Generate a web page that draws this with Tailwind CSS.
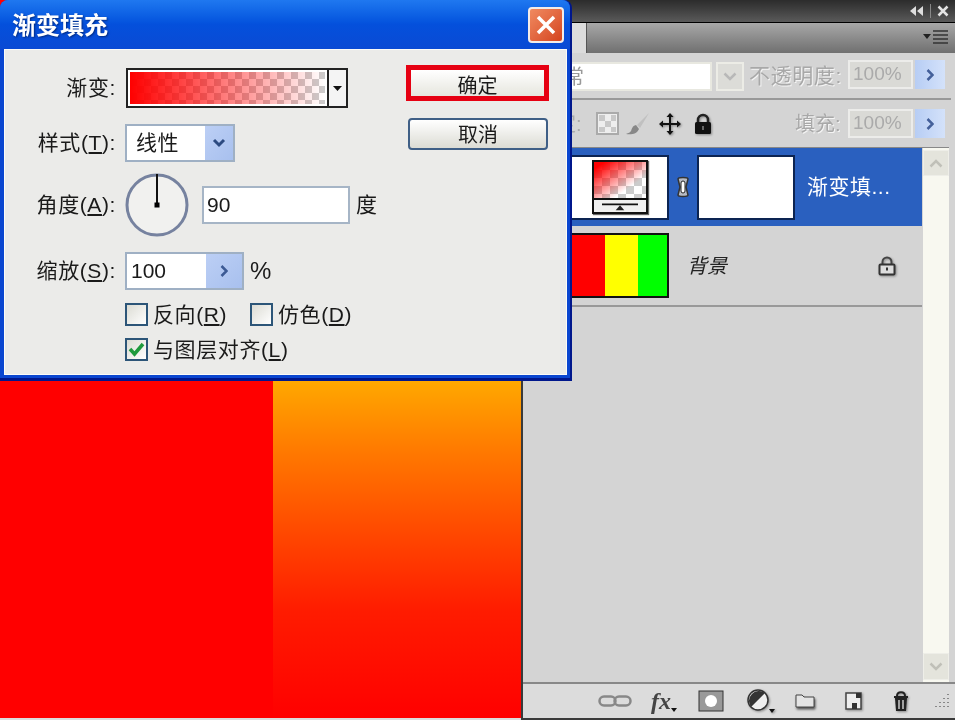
<!DOCTYPE html>
<html lang="zh-CN">
<head>
    <meta charset="UTF-8">
    <title>渐变填充</title>
    <script src="https://cdn.jsdelivr.net/npm/@tailwindcss/browser@4"></script>
</head>
<body class="bg-[#d4d4d4] overflow-hidden">
<div class="relative flex items-start w-[955px] h-[720px] overflow-hidden bg-[#dcdcdc] text-[#1a1a1a] text-[20px] blur-[0.5px] font-['Liberation_Sans','Noto_Sans_CJK_SC',sans-serif]">

    <!-- document canvas -->
    <div class="flex w-[521px] h-[718px] shrink-0">
        <div class="w-[273px] bg-[#ff0000]"></div>
        <div class="flex-1 bg-[linear-gradient(to_bottom,#ffa800_381px,#ff7a00_450px,#ff4a00_530px,#ff1c00_610px,#ff0a00_680px,#ff0000_718px)]"></div>
    </div>

    <!-- layers panel -->
    <div class="flex flex-col w-[434px] h-[720px] border-l-2 border-b-2 border-[#3a3a3a] bg-[#d4d4d4]">
        <div class="flex items-center justify-end gap-[6px] h-[23px] pr-[6px] border-b border-black bg-linear-to-b from-[#2c2c2c] to-[#5a5a5a]">
            <svg width="14" height="10" viewBox="0 0 14 10"><path d="M6 0v10L0 5zM13 0v10L7 5z" fill="#ddd"/></svg>
            <div class="w-px h-[14px] bg-[#888]"></div>
            <svg width="12" height="12" viewBox="0 0 12 12"><path d="M1.500 1.500l9 9M10.500 1.500l-9 9" stroke="#e4e4e4" stroke-width="2.500"/></svg>
        </div>
        <div class="flex items-stretch justify-between h-[30px] bg-linear-to-b from-[#a8a8a8] to-[#707070]">
            <div class="w-[64px] bg-[#dcdcdc] border-r border-[#555]"></div>
            <svg class="mr-[6px] mt-[7px]" width="26" height="16" viewBox="0 0 26 16"><path d="M0 4h8L4 9z" fill="#222"/><path d="M10 1h15M10 5h15M10 9h15M10 13h15" stroke="#333" stroke-width="1.500"/></svg>
        </div>

        <!-- blend mode and opacity -->
        <div class="flex items-center h-[47px] mr-[4px] border-b-2 border-[#999]">
            <div class="flex items-center w-[189px] h-[29px] mt-[2px] pl-[19px] bg-white border-2 border-[#e8e8e0] text-[#999]">正常</div>
            <div class="flex items-center justify-center w-[28px] h-[29px] mt-[2px] ml-[4px] bg-[#dcdcd8] border-2 border-[#ecece6]">
                <svg width="14" height="9" viewBox="0 0 14 9"><path d="M1.500 1.500L7 7l5.500-5.500" fill="none" stroke="#b8b8b8" stroke-width="2.500"/></svg>
            </div>
            <span class="w-[92px] ml-[5px] whitespace-nowrap text-[21px] tracking-[0.6px] text-[#a8a8a8] [text-shadow:1px_1px_0_#f4f4f4]">不透明度:</span>
            <div class="flex items-center w-[65px] h-[29px] mb-[2px] ml-[7px] pl-[3px] bg-[#dadad6] border-2 border-[#ececea] text-[19px] text-[#aaa]">100%</div>
            <div class="flex items-center justify-center w-[30px] h-[29px] mb-[2px] ml-[2px] bg-linear-to-r from-[#b7cdf4] to-[#d4e2fa]">
                <svg width="8" height="12" viewBox="0 0 8 12"><path d="M1.500 1L6.500 6l-5 5" fill="none" stroke="#44609a" stroke-width="2.500"/></svg>
            </div>
        </div>

        <!-- locks and fill -->
        <div class="flex items-center h-[47px] mr-[4px]">
            <span class="w-[50px] pl-[33px] whitespace-nowrap text-[#aaa]">定:</span>
            <svg class="ml-[23px] shrink-0" width="24" height="24" viewBox="0 0 24 24"><rect x="1" y="1" width="21" height="21" fill="#eee" stroke="#aaa" stroke-width="2"/><path d="M3 3h6v6H3zM15 3h5v6h-5zM9 9h6v6H9zM3 15h6v5H3zM15 15h5v5h-5z" fill="#c8c8c8"/></svg>
            <svg class="ml-[5px] shrink-0" width="26" height="24" viewBox="0 0 26 24"><path d="M24 1L12 13l3 3z" fill="#c0c0c0"/><path d="M11 13c-4 1-4 4-5 6-1 2-4 2-5 3 5 1 11 0 13-5z" fill="#888"/></svg>
            <svg class="ml-[8px] shrink-0 drop-shadow-[1px_1px_1px_#888]" width="22" height="24" viewBox="0 0 22 24"><path d="M11 1l3.500 4h-2.500v6h6V8.500l4 3.500-4 3.500V13h-6v6h2.500L11 23l-3.500-4H10v-6H4v2.500L0 12l4-3.500V11h6V5H7.500z" fill="#111"/></svg>
            <svg class="ml-[13px] shrink-0 drop-shadow-[1px_1px_1px_#888]" width="18" height="22" viewBox="0 0 18 22"><path d="M4 10V7a5 5 0 0110 0v3" fill="none" stroke="#222" stroke-width="2.500"/><rect x="1" y="9" width="16" height="12" rx="1.500" fill="#111"/><rect x="8" y="13" width="2" height="4" fill="#666"/></svg>
            <span class="w-[48px] ml-[83px] whitespace-nowrap text-[#a8a8a8] [text-shadow:1px_1px_0_#f4f4f4]">填充:</span>
            <div class="flex items-center w-[65px] h-[29px] ml-[5px] pl-[3px] bg-[#dadad6] border-2 border-[#ececea] text-[19px] text-[#aaa]">100%</div>
            <div class="flex items-center justify-center w-[30px] h-[29px] ml-[2px] bg-linear-to-r from-[#b7cdf4] to-[#d4e2fa]">
                <svg width="8" height="12" viewBox="0 0 8 12"><path d="M1.500 1L6.500 6l-5 5" fill="none" stroke="#44609a" stroke-width="2.500"/></svg>
            </div>
        </div>

        <!-- layer list -->
        <div class="flex flex-1 min-h-0 border-t border-[#888] mr-[6px]">
            <div class="flex flex-col gap-[2px] w-[400px]">
                <div class="flex items-center h-[78px] pl-[20px] bg-[#2a60bf]">
                    <div class="relative flex items-center justify-center w-[126px] h-[65px] bg-white border-2 border-[#0c2452]">
                        <div class="flex flex-col w-[56px] h-[54px] ml-[28px] border-2 border-[#111] shadow-[1px_1px_1px_#666]">
                            <div class="relative flex-1 bg-[repeating-conic-gradient(#ccc_0_25%,#fff_0_50%)] bg-size-[16px_16px]">
                                <div class="absolute inset-0 bg-linear-to-br from-[#ff0000] from-10% to-transparent to-70%"></div>
                            </div>
                            <svg class="bg-[#f0f0f0] border-t-2 border-[#111]" width="52" height="14" viewBox="0 0 52 14"><path d="M5 5h42" stroke="#111" stroke-width="2"/><path d="M26 6l5 6H21z" fill="#222"/></svg>
                        </div>
                    </div>
                    <svg class="mx-[7px] shrink-0" width="14" height="24" viewBox="0 0 14 24"><path d="M2 4c0-2 10-2 10 0l-2 8 2 8c0 2-10 2-10 0l2-8z" fill="#b8bcc4" stroke="#333" stroke-width="1.500"/><rect x="5" y="6" width="4" height="12" rx="2" fill="#fff" stroke="#222"/></svg>
                    <div class="w-[98px] h-[65px] bg-white border-2 border-[#0c2452]"></div>
                    <span class="ml-[12px] text-white text-[21px] tracking-[0.5px] whitespace-nowrap">渐变填...</span>
                </div>
                <div class="flex items-center h-[79px] pl-[20px] pb-[2px] border-b-2 border-[#999]">
                    <div class="flex w-[126px] h-[65px] border-2 border-[#111]">
                        <div class="w-[60px] bg-[#ff0000]"></div>
                        <div class="w-[33px] bg-[#ffff00]"></div>
                        <div class="flex-1 bg-[#00ff00]"></div>
                    </div>
                    <span class="ml-[18px] italic text-[20px] text-[#222]">背景</span>
                    <svg class="ml-[151px] drop-shadow-[1px_1px_1px_#888]" width="18" height="20" viewBox="0 0 18 20"><path d="M4.500 9V6a4.500 4.500 0 019 0v3" fill="none" stroke="#444" stroke-width="2"/><rect x="1.500" y="8.500" width="15" height="10" rx="1" fill="#ddd" stroke="#333" stroke-width="2"/><rect x="8" y="11.500" width="2" height="3" fill="#333"/></svg>
                </div>
            </div>
            <div class="flex flex-col justify-between w-[26px] ml-px pt-[2px] pb-[2px] bg-[#f8f8f0]">
                <div class="flex items-center justify-center h-[26px] bg-[#e4e4dc] border border-[#eeeee8]">
                    <svg width="14" height="9" viewBox="0 0 14 9"><path d="M1.500 7.500L7 2l5.500 5.500" fill="none" stroke="#c0c0b8" stroke-width="2.500"/></svg>
                </div>
                <div class="flex items-center justify-center h-[27px] bg-[#e4e4dc] border border-[#eeeee8]">
                    <svg width="14" height="9" viewBox="0 0 14 9"><path d="M1.500 1.500L7 7l5.500-5.500" fill="none" stroke="#c0c0b8" stroke-width="2.500"/></svg>
                </div>
            </div>
        </div>

        <!-- panel buttons -->
        <div class="flex items-center h-[36px] border-t-2 border-[#888] bg-[#dcdcdc]">
            <svg class="ml-[75px] shrink-0" width="34" height="14" viewBox="0 0 34 14"><rect x="1.500" y="2.500" width="16" height="9" rx="4.500" fill="none" stroke="#888" stroke-width="2.500"/><rect x="16.500" y="2.500" width="16" height="9" rx="4.500" fill="none" stroke="#888" stroke-width="2.500"/></svg>
            <div class="flex items-start w-[29px] ml-[19px] font-['Liberation_Serif',serif] italic font-bold text-[24px] leading-[24px] text-[#444]">fx<svg class="mt-[19px]" width="6" height="4" viewBox="0 0 6 4"><path d="M0 0h6L3 4z" fill="#111"/></svg></div>
            <svg class="ml-[18px] shrink-0" width="26" height="22" viewBox="0 0 26 22"><rect x="1" y="1" width="24" height="20" fill="#999" stroke="#333"/><circle cx="13" cy="11" r="6" fill="#fff"/></svg>
            <svg class="ml-[23px] shrink-0 drop-shadow-[1px_1px_1px_#888]" width="28" height="24" viewBox="0 0 28 24"><circle cx="11" cy="11" r="10" fill="#eee" stroke="#333" stroke-width="1.500"/><path d="M18 4A10 10 0 004 18z" fill="#333"/><path d="M22 20h6l-3 4z" fill="#111"/></svg>
            <svg class="ml-[20px] shrink-0 drop-shadow-[1px_2px_1px_#555]" width="20" height="16" viewBox="0 0 20 16"><path d="M1 14V2h6l2 2h10v10z" fill="#e4e4e4" stroke="#444" stroke-width="1"/></svg>
            <svg class="ml-[30px] shrink-0 drop-shadow-[1px_1px_1px_#888]" width="17" height="18" viewBox="0 0 17 18"><rect x="1" y="1" width="15" height="16" fill="#eee" stroke="#444" stroke-width="1.500"/><path d="M11 1h5v5h-5zM7 11h5v6H7z" fill="#333"/></svg>
            <svg class="ml-[30px] shrink-0 drop-shadow-[1px_1px_1px_#888]" width="18" height="22" viewBox="0 0 18 22"><path d="M2 7h14M5 6c0-5 8-5 8 0" fill="none" stroke="#222" stroke-width="2"/><path d="M3 8h12l-1 13H4z" fill="#222"/><path d="M7 10v9M11 10v9" stroke="#ccc" stroke-width="1.500"/></svg>
            <svg class="ml-[23px] shrink-0" width="17" height="17" viewBox="0 0 17 17"><path d="M15 1v1M11 5v1M15 5v1M7 9v1M11 9v1M15 9v1M3 13v1M7 13v1M11 13v1M15 13v1" stroke="#888" stroke-width="2"/></svg>
        </div>
    </div>

    <!-- gradient fill dialog -->
    <div class="absolute left-0 top-0 flex flex-col w-[572px] h-[381px] pl-[4px] pr-[3px] pb-[3px] rounded-t-[8px] bg-[#0a46d0] border-r-2 border-b-3 border-[#00178c]">
        <div class="flex items-center justify-between h-[49px] pl-[9px] pr-[6px] -ml-[4px] -mr-[3px] rounded-t-[8px] bg-linear-to-b from-[#1f78f0] via-[#0450dc] to-[#0a4ad4]">
            <span class="ml-[3px] mt-[2px] font-bold text-[24px] text-white [text-shadow:1px_1px_2px_#002a80]">渐变填充</span>
            <div class="flex items-center justify-center w-[36px] h-[36px] rounded-[4px] border-2 border-[#f4ece8] bg-linear-to-br from-[#f08a60] to-[#d4421c]">
                <svg width="22" height="22" viewBox="0 0 22 22"><path d="M3 3l16 16M19 3L3 19" stroke="#fff" stroke-width="3.500"/></svg>
            </div>
        </div>
        <div class="flex flex-1 min-h-0 bg-[#ebebe9] border border-[#fbfbf8] text-[21px] tracking-[0.6px]">
            <div class="flex flex-col w-[401px] pt-[18px]">
                <div class="flex items-center h-[40px]">
                    <span class="w-[111px] text-right">渐变:</span>
                    <div class="flex w-[222px] h-[40px] ml-[10px] border-2 border-[#222] bg-white">
                        <div class="relative flex-1 border-2 border-white bg-[repeating-conic-gradient(#ccc_0_25%,#fff_0_50%)] bg-size-[14px_14px]">
                            <div class="absolute inset-0 bg-linear-to-r from-[#ff0000] to-transparent"></div>
                        </div>
                        <div class="flex items-center justify-center w-[19px] border-l-2 border-[#222] bg-[#f4f4f4]">
                            <svg width="9" height="5" viewBox="0 0 9 5"><path d="M0 0h9L4.500 5z" fill="#111"/></svg>
                        </div>
                    </div>
                </div>
                <div class="flex items-center h-[38px] mt-[16px]">
                    <span class="w-[111px] text-right whitespace-nowrap">样式(<u>T</u>):</span>
                    <div class="flex w-[110px] h-[38px] ml-[9px] bg-white border-2 border-[#9fb0c4]">
                        <span class="flex-1 pl-[9px] leading-[34px]">线性</span>
                        <div class="flex items-center justify-center w-[28px] bg-linear-to-br from-[#bccff5] to-[#a8c0ee]">
                            <svg width="14" height="10" viewBox="0 0 14 10"><path d="M2 2l5 5 5-5" fill="none" stroke="#2c4a80" stroke-width="3"/></svg>
                        </div>
                    </div>
                </div>
                <div class="flex items-center h-[64px] mt-[11px]">
                    <span class="w-[111px] text-right whitespace-nowrap">角度(<u>A</u>):</span>
                    <svg class="ml-[9px] shrink-0" width="64" height="64" viewBox="0 0 64 64"><circle cx="32" cy="32" r="30" fill="#f1f1ef" stroke="#76829f" stroke-width="3"/><path d="M32 1v31" stroke="#111" stroke-width="2"/><rect x="29.500" y="29.500" width="5" height="5" fill="#000"/></svg>
                    <div class="w-[148px] h-[38px] ml-[13px] pl-[3px] bg-white border-2 border-[#a6b5c6] tracking-normal leading-[34px]">90</div>
                    <span class="ml-[6px]">度</span>
                </div>
                <div class="flex items-center h-[38px] mt-[15px]">
                    <span class="w-[111px] text-right whitespace-nowrap">缩放(<u>S</u>):</span>
                    <div class="flex w-[119px] h-[38px] ml-[9px] bg-white border-2 border-[#9fb0c4]">
                        <span class="flex-1 pl-[4px] tracking-normal leading-[34px]">100</span>
                        <div class="flex items-center justify-center w-[36px] bg-linear-to-br from-[#bccff5] to-[#a8c0ee]">
                            <svg width="8" height="12" viewBox="0 0 8 12"><path d="M1.500 1L6.500 6l-5 5" fill="none" stroke="#3c5a94" stroke-width="2.500"/></svg>
                        </div>
                    </div>
                    <span class="ml-[6px] text-[24px] tracking-normal">%</span>
                </div>
                <div class="flex items-center h-[23px] mt-[13px] ml-[120px]">
                    <div class="w-[23px] h-[23px] border-2 border-[#2c5578] bg-linear-to-br from-[#dcdcd4] to-white"></div>
                    <span class="ml-[5px] w-[75px] whitespace-nowrap">反向(<u>R</u>)</span>
                    <div class="w-[23px] h-[23px] ml-[22px] border-2 border-[#2c5578] bg-linear-to-br from-[#dcdcd4] to-white"></div>
                    <span class="ml-[5px] whitespace-nowrap">仿色(<u>D</u>)</span>
                </div>
                <div class="flex items-center h-[23px] mt-[12px] ml-[120px]">
                    <div class="flex items-center justify-center w-[23px] h-[23px] border-2 border-[#2c5578] bg-linear-to-br from-[#dcdcd4] to-white">
                        <svg width="17" height="15" viewBox="0 0 17 15"><path d="M2 7l4.500 5L15 2" fill="none" stroke="#1e9a3c" stroke-width="3.500"/></svg>
                    </div>
                    <span class="ml-[5px] whitespace-nowrap">与图层对齐(<u>L</u>)</span>
                </div>
            </div>
            <div class="flex flex-col pt-[15px] text-[20px] tracking-normal">
                <div class="flex items-center justify-center w-[143px] h-[36px] pt-[5px] border-[5px] border-[#e60012] bg-linear-to-b from-white to-[#e6e6de]">确定</div>
                <div class="flex items-center justify-center w-[140px] h-[32px] mt-[17px] ml-[2px] pt-[2px] rounded-[4px] border-2 border-[#3f5f86] bg-linear-to-b from-white to-[#dcdcd4]">取消</div>
            </div>
        </div>
    </div>
</div>
</body>
</html>
